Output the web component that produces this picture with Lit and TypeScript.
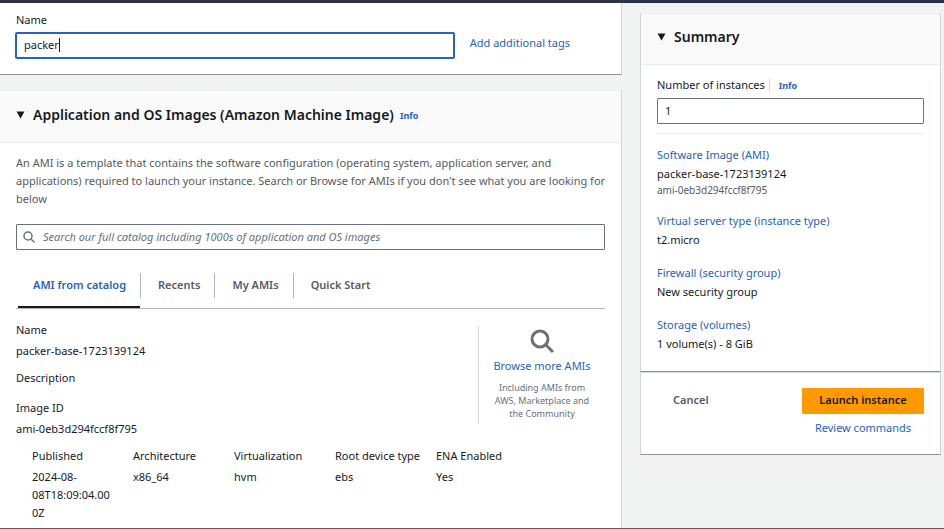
import { LitElement, html, css } from "lit";
import { customElement, state } from "lit/decorators.js";
import { classMap } from "lit/directives/class-map.js";

const shared = css`
  :host { display: block; }
  *, *::before, *::after { box-sizing: border-box; }
  a { color: #2563bd; text-decoration: none; }
  h2, p, dl, dd { margin: 0; }
  .card {
    background: #fff;
    border: 1px solid #d0d6d6;
    border-top-color: #eaeded;
    border-bottom-color: #879596;
  }
  .head {
    display: flex;
    align-items: center;
    height: 52px;
    padding: 0 16px 4px;
    background: #fafafa;
    border-bottom: 1px solid #e6ebeb;
  }
  .toggle {
    display: flex;
    align-items: center;
    gap: 8px;
    padding: 0;
    border: 0;
    background: none;
    font: inherit;
    color: inherit;
  }
  .title { font-size: 14px; line-height: 18px; font-weight: 600; white-space: nowrap; }
  .info { font-size: 9px; line-height: 18px; font-weight: 700; }
  .box {
    display: block;
    width: 100%;
    height: 26px;
    padding: 0 7px 2px;
    border: 1px solid #687078;
    border-radius: 1px;
    background: #fff;
    color: #16191f;
    font: inherit;
    outline: none;
  }
`;

const caret = html`<svg width="9" height="8" viewBox="0 0 9 8" aria-hidden="true"><path d="M.5 .5h8L4.500 7.500z" fill="#16191f"></path></svg>`;
const lens = (size: number, stroke: number) => html`<svg width=${size} height=${size} viewBox="0 0 24 24" fill="none" stroke="#687078" stroke-width=${stroke} aria-hidden="true"><circle cx="10" cy="10" r="8"></circle><path d="M16 16l7 7"></path></svg>`;

@customElement("name-panel")
class NamePanel extends LitElement {
  static styles = [shared, css`
    .card { border-left: 0; border-top: 0; padding: 8px 16px 15px; }
    .label { display: block; line-height: 18px; }
    .row { display: flex; align-items: center; gap: 15px; margin-top: 3px; }
    .field { position: relative; width: calc(75% - 2px); margin-left: -1px; }
    .box { height: 27px; border: 2px solid #2563bd; border-radius: 2px; caret-color: transparent; }
    .cursor { position: absolute; left: 44px; top: 6px; width: 1px; height: 14px; background: #16191f; }
    .tags { padding-bottom: 5px; white-space: nowrap; }
  `];
  render() {
    return html`<section class="card">
      <label class="label" for="name">Name</label>
      <div class="row">
        <div class="field"><input class="box" id="name" type="text" value="packer"><span class="cursor"></span></div>
        <a class="tags" href="#tags">Add additional tags</a>
      </div>
    </section>`;
  }
}

@customElement("image-panel")
class ImagePanel extends LitElement {
  static styles = [shared, css`
    .card { border-left: 0; }
    .head { gap: 6px; }
    .info { padding-top: 2px; }
    .body { padding: 11px 16px 24px; }
    .intro { margin-right: -8px; color: #545b64; }
    .search { position: relative; margin-top: 16px; }
    .search svg { position: absolute; left: 7px; top: 7px; }
    .search .box { padding-left: 26px; }
    .box::placeholder { color: #687078; font-style: italic; opacity: 1; }
    .tabs { display: flex; height: 59px; padding: 23px 2px 0; border-bottom: 1px solid #aab7b8; }
    .tab {
      position: relative;
      height: 35px;
      padding: 0 14px 12px 18px;
      border: 0;
      background: none;
      font: inherit;
      font-weight: 600;
      color: #545b64;
      white-space: nowrap;
    }
    .tab + .tab::before { content: ""; position: absolute; left: 0; top: 0; width: 1px; height: 25px; background: #aab7b8; }
    .tab:first-child { padding-left: 15px; }
    .tab.on { padding-bottom: 10px; border-bottom: 2px solid #16191f; color: #2563bd; }
    .detail { display: flex; justify-content: space-between; margin-top: 12px; }
    dl { display: flex; flex-direction: column; }
    dt + dd { margin-top: 3px; }
    dd + dt { margin-top: 9px; }
    .more { display: flex; flex-direction: column; align-items: center; width: 127px; height: 98px; margin-top: 5px; padding-top: 3px; border-left: 1px solid #d5dbdb; text-align: center; }
    .more a { margin-top: 4px; white-space: nowrap; }
    .note { width: 104px; margin-top: 6px; font-size: 9px; line-height: 13px; color: #687078; }
    .specs { display: grid; grid-template-columns: repeat(5, 81px); gap: 20px; margin: 9px 16px 0; }
    .specs dt { white-space: nowrap; }
    .specs dd { overflow-wrap: anywhere; }
  `];
  @state() private active = 0;
  render() {
    const tabs = ["AMI from catalog", "Recents", "My AMIs", "Quick Start"];
    const specs = [
      ["Published", "2024-08-08T18:09:04.000Z"],
      ["Architecture", "x86_64"],
      ["Virtualization", "hvm"],
      ["Root device type", "ebs"],
      ["ENA Enabled", "Yes"],
    ];
    return html`<section class="card">
      <div class="head">
        <h2 class="title"><button class="toggle">${caret}Application and OS Images (Amazon Machine Image)</button></h2>
        <a class="info" href="#info">Info</a>
      </div>
      <div class="body">
        <p class="intro">An AMI is a template that contains the software configuration (operating system, application server, and applications) required to launch your instance. Search or Browse for AMIs if you don't see what you are looking for below</p>
        <div class="search">${lens(12, 3)}<input class="box" type="search" aria-label="Search images" placeholder="Search our full catalog including 1000s of application and OS images"></div>
        <div class="tabs" role="tablist">${tabs.map((t, i) => html`<button role="tab" class=${classMap({ tab: true, on: i === this.active })} @click=${() => (this.active = i)}>${t}</button>`)}</div>
        <div class="detail">
          <dl>
            <dt>Name</dt><dd>packer-base-1723139124</dd>
            <dt>Description</dt><dd></dd>
            <dt>Image ID</dt><dd>ami-0eb3d294fccf8f795</dd>
          </dl>
          <div class="more">
            ${lens(24, 3)}
            <a href="#browse">Browse more AMIs</a>
            <p class="note">Including AMIs from AWS, Marketplace and the Community</p>
          </div>
        </div>
        <div class="specs">${specs.map(([k, v]) => html`<dl><dt>${k}</dt><dd>${v}</dd></dl>`)}</div>
      </div>
    </section>`;
  }
}

@customElement("summary-panel")
class SummaryPanel extends LitElement {
  static styles = [shared, css`
    .head { height: 51px; }
    .body { padding: 11px 16px 18px; }
    .labels { display: flex; align-items: center; gap: 4px; margin-bottom: 4px; }
    .labels .info { padding-left: 9px; border-left: 1px solid #d5dbdb; line-height: 13px; }
    .rule { height: 1px; margin: 9px 0 12px; border: 0; background: #eaeded; }
    .items { display: flex; flex-direction: column; gap: 15px; }
    .item a, .value { display: block; }
    .value { margin-top: 1px; }
    .sub { display: block; font-size: 10px; line-height: 14px; color: #545b64; }
    .actions { display: flex; justify-content: space-between; align-items: flex-start; border-top-color: #d5dbdb; padding: 15px 16px 16px; }
    .btn { height: 26px; border: 0; border-radius: 1px; font: inherit; font-weight: 600; white-space: nowrap; }
    .plain { padding: 0 16px 2px; background: none; color: #545b64; }
    .primary { width: 122px; padding: 0 0 2px; background: #ff9900; color: #16191f; }
    .launch { display: flex; flex-direction: column; align-items: center; gap: 4px; }
    .launch a { line-height: 20px; }
  `];
  render() {
    const items = [
      ["Software Image (AMI)", "packer-base-1723139124", "ami-0eb3d294fccf8f795"],
      ["Virtual server type (instance type)", "t2.micro"],
      ["Firewall (security group)", "New security group"],
      ["Storage (volumes)", "1 volume(s) - 8 GiB"],
    ];
    return html`<section class="card">
        <div class="head"><h2 class="title"><button class="toggle">${caret}Summary</button></h2></div>
        <div class="body">
          <div class="labels"><label for="count">Number of instances</label><a class="info" href="#info">Info</a></div>
          <input class="box" id="count" type="text" inputmode="numeric" value="1">
          <hr class="rule">
          <div class="items">${items.map(([k, v, s]) => html`<div class="item"><a href="#edit">${k}</a><span class="value">${v}</span>${s ? html`<span class="sub">${s}</span>` : ""}</div>`)}</div>
        </div>
      </section>
      <section class="card actions">
        <button class="btn plain">Cancel</button>
        <div class="launch"><button class="btn primary">Launch instance</button><a href="#review">Review commands</a></div>
      </section>`;
  }
}

@customElement("app-root")
class AppRoot extends LitElement {
  static styles = css`
    :host {
      display: flex;
      flex-direction: column;
      box-sizing: border-box;
      height: 100vh;
      overflow: hidden;
      background: #f2f3f3;
      border-top: 3px solid #2b3144;
      border-bottom: 1px solid #545b6e;
      color: #16191f;
      font: 11px/18px "Noto Sans", "Open Sans", sans-serif;
    }
    .page { display: grid; grid-template-columns: minmax(0, 1fr) 301px; gap: 18px; align-items: start; padding-right: 3px; }
    .main { display: flex; flex-direction: column; gap: 15px; }
    .side { margin-top: 10px; }
  `;
  render() {
    return html`<div class="page">
      <main class="main"><name-panel></name-panel><image-panel></image-panel></main>
      <aside class="side"><summary-panel></summary-panel></aside>
    </div>`;
  }
}
